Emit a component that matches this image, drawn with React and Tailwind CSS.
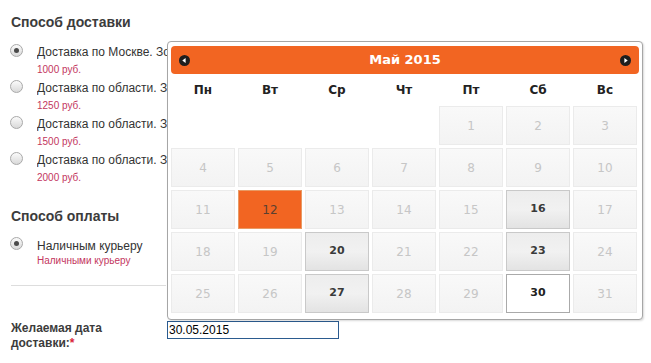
import React from "react";

function Radio({ checked }) {
  return (
    <div className="w-[13px] h-[13px] shrink-0 rounded-full border border-[#a9a9a9] bg-gradient-to-b from-[#fbfbfb] to-[#d9d9d9] flex items-center justify-center">
      {checked && <div className="w-[5px] h-[5px] rounded-full bg-[#4a4a4a]" />}
    </div>
  );
}

function Item({ label, price, checked }) {
  return (
    <div className="flex h-[36px] items-start">
      <Radio checked={checked} />
      <div className="ml-[14px] w-[130px] overflow-hidden whitespace-nowrap">
        <div className="text-[12px] leading-[16px] text-[#333]">{label}</div>
        <div className="mt-[4px] text-[10px] leading-[12px] text-[#c3365e]">{price}</div>
      </div>
    </div>
  );
}

function Arrow({ dir }) {
  return (
    <svg width="11" height="11" viewBox="0 0 11 11">
      <circle cx="5.5" cy="5.5" r="5.5" fill="#1e1e1e" />
      {dir === "left" ? (
        <polygon points="3.3,5.5 6.6,3 6.6,8" fill="#fff" />
      ) : (
        <polygon points="7.7,5.5 4.4,3 4.4,8" fill="#fff" />
      )}
    </svg>
  );
}

const days = ["Пн", "Вт", "Ср", "Чт", "Пт", "Сб", "Вс"];
const active = [16, 20, 23, 27];

function Cell({ d }) {
  if (d === null) return <div className="h-[39px]" />;
  if (d === 12)
    return (
      <div className="h-[39px] border border-[#e89a64] bg-[#f26522] flex items-center justify-center text-[12px] text-[#5a4030]">
        {d}
      </div>
    );
  if (d === 30)
    return (
      <div className="h-[39px] border border-[#aaaaaa] bg-white flex items-center justify-center text-[11px] font-bold text-[#212121]">
        {d}
      </div>
    );
  if (active.includes(d))
    return (
      <div className="h-[39px] border border-[#c9c9c9] bg-gradient-to-b from-[#ededed] via-[#f1f1f1] to-[#e3e3e3] flex items-center justify-center text-[11px] font-bold text-[#3a3a3a]">
        {d}
      </div>
    );
  return (
    <div className="h-[39px] border border-[#ebebeb] bg-gradient-to-b from-[#f9f9f9] to-[#f3f3f3] flex items-center justify-center text-[12px] text-[#c6c6c6]">
      {d}
    </div>
  );
}

export default function App() {
  const cells = [null, null, null, null];
  for (let i = 1; i <= 31; i++) cells.push(i);

  return (
    <div className="relative w-[651px] h-[363px] bg-white overflow-hidden font-['Liberation_Sans',Arial,sans-serif]">
      <div className="pl-[10px] pt-[13px]">
        <h3 className="pl-[1px] text-[14px] leading-[18px] font-bold text-[#3c3c3c]">Способ доставки</h3>
        <div className="mt-[13px]">
          <Item checked label="Доставка по Москве. Зона 1" price="1000 руб." />
          <Item label="Доставка по области. Зона 2" price="1250 руб." />
          <Item label="Доставка по области. Зона 3" price="1500 руб." />
          <Item label="Доставка по области. Зона 4" price="2000 руб." />
        </div>
        <h3 className="pl-[1px] mt-[19px] text-[14px] leading-[18px] font-bold text-[#3c3c3c]">Способ оплаты</h3>
        <div className="mt-[13px] flex items-start">
          <div className="mt-[-1px]">
            <Radio checked />
          </div>
          <div className="ml-[14px] whitespace-nowrap">
            <div className="text-[12px] leading-[16px] text-[#333]">Наличным курьеру</div>
            <div className="mt-[1px] text-[10px] leading-[12px] text-[#c3365e]">Наличными курьеру</div>
          </div>
        </div>
        <div className="ml-[1px] mt-[18px] w-[155px] h-px bg-[#dddddd]" />
        <div className="mt-[35px] flex items-start">
          <div className="pl-[1px] w-[157px] text-[12px] leading-[15px] font-bold text-[#3c3c3c]">
            Желаемая дата доставки:<span className="text-[#d9263a]">*</span>
          </div>
          <div className="w-[172px] h-[18px] border border-[#2b5b8f] bg-white px-[1px] text-[12px] leading-[16px] text-black">
            30.05.2015
          </div>
        </div>
      </div>

      <div className="absolute left-[167px] top-[41px] w-[476px] h-[279px] rounded-[4px] border border-[#a6a6a6] bg-white shadow-[1px_1px_2px_rgba(0,0,0,0.15)] px-[3px] pt-[4px] font-['DejaVu_Sans',Verdana,sans-serif]">
        <div className="h-[28px] rounded-[4px] bg-[#f26522] flex items-center justify-between px-[8px]">
          <Arrow dir="left" />
          <span className="text-[13px] font-bold text-white">Май 2015</span>
          <Arrow dir="right" />
        </div>
        <div className="grid grid-cols-[repeat(7,64px)] gap-x-[3px] h-[32px] items-center">
          {days.map((d) => (
            <div key={d} className="text-center text-[12px] font-bold text-[#222]">
              {d}
            </div>
          ))}
        </div>
        <div className="grid grid-cols-[repeat(7,64px)] gap-x-[3px] gap-y-[3px]">
          {cells.map((d, i) => (
            <Cell key={i} d={d} />
          ))}
        </div>
      </div>
    </div>
  );
}
